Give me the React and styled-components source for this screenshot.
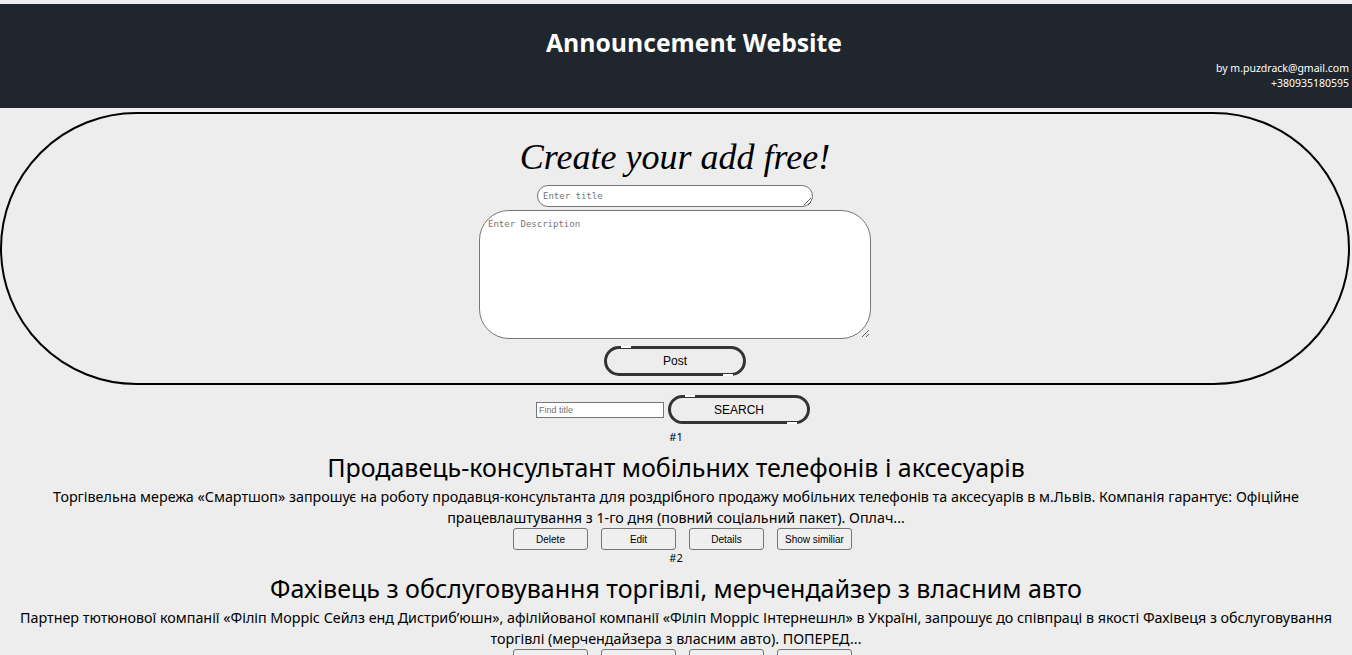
import React, { useState } from 'react';
import styled, { createGlobalStyle } from 'styled-components';

const GlobalStyle = createGlobalStyle`
  html, body {
    margin: 0;
    padding: 0;
    background: #ededed;
  }
  body {
    padding-top: 4px;
    overflow: hidden;
    font-family: "Noto Sans", "Open Sans", sans-serif;
    color: #000;
  }
`;

const Header = styled.header`
  position: relative;
  height: 104px;
  background: #20262d;
  color: #fff;
  display: flex;
  flex-direction: column;
  align-items: center;
`;

const SiteTitle = styled.h1`
  margin: 22px 0 0;
  padding-left: 36px;
  font-size: 24.7px;
  font-weight: 700;
  font-family: "Open Sans", "Noto Sans", sans-serif;
`;

const Contacts = styled.div`
  align-self: flex-end;
  margin-top: 2px;
  margin-right: 3px;
  text-align: right;
  font-size: 10.5px;
  line-height: 15px;
`;

const CreateForm = styled.form`
  margin: 4px 2px 0 0;
  height: 269px;
  border: 2px solid #000;
  border-radius: 140px;
  display: flex;
  flex-direction: column;
  align-items: center;
`;

const FormTitle = styled.h2`
  margin: 20px 0 0;
  font-family: "Liberation Serif", serif;
  font-style: italic;
  font-weight: 400;
  font-size: 36px;
  line-height: 46px;
`;

const TitleInput = styled.textarea`
  box-sizing: border-box;
  margin-top: 5px;
  width: 276px;
  height: 22px;
  border: 1px solid #767676;
  border-radius: 11px;
  padding: 5px 5px 0;
  font-family: "DejaVu Sans Mono", monospace;
  font-size: 9px;
  resize: both;
  background: #fff;
  &::placeholder { color: #757575; }
`;

const DescInput = styled.textarea`
  box-sizing: border-box;
  margin-top: 3px;
  width: 392px;
  height: 129px;
  border: 1px solid #767676;
  border-radius: 30px;
  padding: 8px 8px;
  font-family: "DejaVu Sans Mono", monospace;
  font-size: 9px;
  background: #fff;
  &::placeholder { color: #757575; }
`;

const PillButton = styled.button`
  position: relative;
  box-sizing: border-box;
  width: 142px;
  height: ${p => p.$h || 30}px;
  margin-top: ${p => p.$mt || 0}px;
  border: 3px solid #333;
  border-radius: 15px;
  background: #ededed;
  font-family: "Liberation Sans", Arial, sans-serif;
  font-size: 12px;
  color: #000;
  &::before, &::after {
    content: '';
    position: absolute;
    width: 10px;
    height: 2px;
    background: #fff;
  }
  &::before { top: -3px; left: 14px; }
  &::after { bottom: -3px; right: 10px; }
`;

const SearchRow = styled.div`
  display: flex;
  justify-content: center;
  align-items: center;
  gap: 4px;
  margin-top: 10px;
  padding-right: 6px;
`;

const SearchInput = styled.input`
  box-sizing: border-box;
  width: 128px;
  height: 16px;
  border: 1px solid #767676;
  padding: 1px 2px;
  font-size: 9px;
  font-family: "Liberation Sans", Arial, sans-serif;
  background: #fff;
  &::placeholder { color: #757575; }
`;

const AdList = styled.section`
  display: flex;
  flex-direction: column;
  align-items: center;
  text-align: center;
  padding-top: 5px;
`;

const AdItem = styled.article`
  display: flex;
  flex-direction: column;
  align-items: center;
`;

const AdNumber = styled.div`
  font-size: 11px;
  line-height: 14px;
  margin-top: 1px;
`;

const AdTitle = styled.h3`
  margin: 5px 0 0;
  font-size: 25px;
  font-weight: 400;
  line-height: 36px;
`;

const AdText = styled.p`
  margin: 1px 0 0;
  padding: 0 20px;
  font-size: 14.3px;
  line-height: 21px;
`;

const ActionRow = styled.div`
  display: flex;
  gap: 13px;
  padding-left: 13px;
`;

const ActionButton = styled.button`
  box-sizing: border-box;
  width: 75px;
  height: 22px;
  border: 1px solid #767676;
  border-radius: 3px;
  background: #efefef;
  font-family: "Liberation Sans", Arial, sans-serif;
  font-size: 10px;
  color: #000;
  padding: 0;
`;

const ads = [
  {
    id: 1,
    title: 'Продавець-консультант мобільних телефонів і аксесуарів',
    text: 'Торгівельна мережа «Смартшоп» запрошує на роботу продавця-консультанта для роздрібного продажу мобільних телефонів та аксесуарів в м.Львів. Компанія гарантує: Офіційне працевлаштування з 1-го дня (повний соціальний пакет). Оплач...',
  },
  {
    id: 2,
    title: 'Фахівець з обслуговування торгівлі, мерчендайзер з власним авто',
    text: 'Партнер тютюнової компанії «Філіп Морріс Сейлз енд Дистриб\u2019юшн», афілійованої компанії «Філіп Морріс Інтернешнл» в Україні, запрошує до співпраці в якості Фахівеця з обслуговування торгівлі (мерчендайзера з власним авто). ПОПЕРЕД...',
  },
];

const App = () => {
  const [title, setTitle] = useState('');
  const [desc, setDesc] = useState('');
  const [search, setSearch] = useState('');

  return (
    <>
      <GlobalStyle />
      <Header>
        <SiteTitle>Announcement Website</SiteTitle>
        <Contacts>
          by m.puzdrack@gmail.com
          <br />
          +380935180595
        </Contacts>
      </Header>
      <CreateForm onSubmit={e => e.preventDefault()}>
        <FormTitle>Create your add free!</FormTitle>
        <TitleInput
          placeholder="Enter title"
          value={title}
          onChange={e => setTitle(e.target.value)}
        />
        <DescInput
          placeholder="Enter Description"
          value={desc}
          onChange={e => setDesc(e.target.value)}
        />
        <PillButton $mt={7}>Post</PillButton>
      </CreateForm>
      <SearchRow>
        <SearchInput
          placeholder="Find title"
          value={search}
          onChange={e => setSearch(e.target.value)}
        />
        <PillButton $h={29}>SEARCH</PillButton>
      </SearchRow>
      <AdList>
        {ads.map(ad => (
          <AdItem key={ad.id}>
            <AdNumber>#{ad.id}</AdNumber>
            <AdTitle>{ad.title}</AdTitle>
            <AdText>{ad.text}</AdText>
            <ActionRow>
              <ActionButton>Delete</ActionButton>
              <ActionButton>Edit</ActionButton>
              <ActionButton>Details</ActionButton>
              <ActionButton>Show similiar</ActionButton>
            </ActionRow>
          </AdItem>
        ))}
      </AdList>
    </>
  );
};

export default App;
